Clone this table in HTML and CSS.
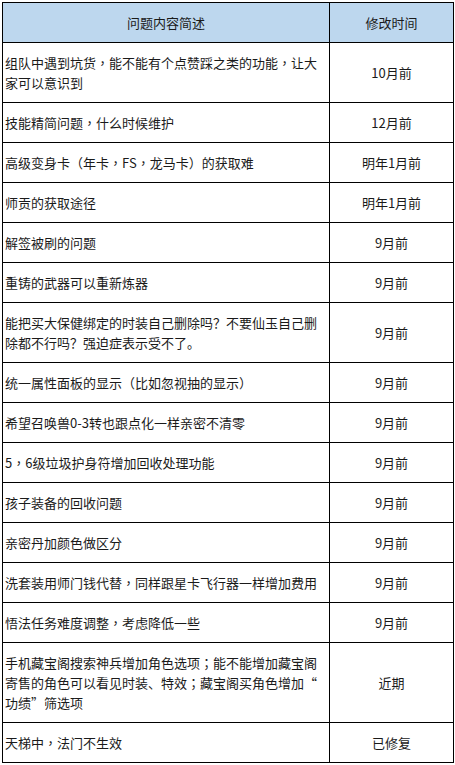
FILE: index.html
```html
<!DOCTYPE html>
<html lang="zh-CN">
<head>
<meta charset="utf-8">
<link rel="stylesheet" href="styles.css">
</head>
<body>
<div class="table">
  <div class="cell head">问题内容简述</div><div class="cell head c">修改时间</div>
  <div class="cell r2"><p class="t">组队中遇到坑货<span class="p" lang="zh-TW">，</span>能不能有个点赞踩之类的功能<span class="p" lang="zh-TW">，</span>让大家可以意识到</p></div><div class="cell c r2">10月前</div>
  <div class="cell"><p class="t">技能精简问题<span class="p" lang="zh-TW">，</span>什么时候维护</p></div><div class="cell c">12月前</div>
  <div class="cell"><p class="t">高级变身卡（年卡<span class="p" lang="zh-TW">，</span>FS<span class="p" lang="zh-TW">，</span>龙马卡）的获取难</p></div><div class="cell c">明年1月前</div>
  <div class="cell"><p class="t">师贡的获取途径</p></div><div class="cell c">明年1月前</div>
  <div class="cell"><p class="t">解签被刷的问题</p></div><div class="cell c">9月前</div>
  <div class="cell"><p class="t">重铸的武器可以重新炼器</p></div><div class="cell c">9月前</div>
  <div class="cell r2"><p class="t">能把买大保健绑定的时装自己删除吗？不要仙玉自己删除都不行吗？强迫症表示受不了。</p></div><div class="cell c r2">9月前</div>
  <div class="cell"><p class="t">统一属性面板的显示（比如忽视抽的显示）</p></div><div class="cell c">9月前</div>
  <div class="cell"><p class="t">希望召唤兽0-3转也跟点化一样亲密不清零</p></div><div class="cell c">9月前</div>
  <div class="cell"><p class="t">5<span class="p" lang="zh-TW">，</span>6级垃圾护身符增加回收处理功能</p></div><div class="cell c">9月前</div>
  <div class="cell"><p class="t">孩子装备的回收问题</p></div><div class="cell c">9月前</div>
  <div class="cell"><p class="t">亲密丹加颜色做区分</p></div><div class="cell c">9月前</div>
  <div class="cell"><p class="t">洗套装用师门钱代替<span class="p" lang="zh-TW">，</span>同样跟星卡飞行器一样增加费用</p></div><div class="cell c">9月前</div>
  <div class="cell"><p class="t">悟法任务难度调整<span class="p" lang="zh-TW">，</span>考虑降低一些</p></div><div class="cell c">9月前</div>
  <div class="cell r3"><p class="t any">手机藏宝阁搜索神兵增加角色选项<span class="p" lang="zh-TW">；</span>能不能增加藏宝阁寄售的角色可以看见时装、特效<span class="p" lang="zh-TW">；</span>藏宝阁买角色增加“功绩”筛选项</p></div><div class="cell c r3">近期</div>
  <div class="cell"><p class="t">天梯中<span class="p" lang="zh-TW">，</span>法门不生效</p></div><div class="cell c">已修复</div>
</div>
</body>
</html>
```

FILE: styles.css
```css
html, body {
  margin: 0;
  padding: 0;
  background: #ffffff;
}
body {
  width: 455px;
  height: 765px;
  overflow: hidden;
  font-family: "Noto Sans CJK SC", "Microsoft YaHei", sans-serif;
  font-size: 13px;
  line-height: 20px;
  color: #1a1a1a;
}
.table {
  margin: 2px 0 0 2px;
  display: grid;
  grid-template-columns: 327px 124px;
  width: 451px;
  border-top: 1px solid #000;
  border-left: 1px solid #000;
}
.cell {
  box-sizing: border-box;
  height: 40px;
  border-right: 1px solid #000;
  border-bottom: 1px solid #000;
  padding: 0 8px 0 2px;
  display: flex;
  align-items: center;
}
.t {
  margin: 0;
  word-break: break-all;
}
.t.any {
  line-break: anywhere;
}
.p {
  font-family: "Noto Sans CJK TC", "Noto Sans CJK SC", sans-serif;
}
.cell.c {
  justify-content: center;
  text-align: center;
  padding: 0;
}
.head {
  background: #bdd7ee;
  justify-content: center;
  padding: 0;
}
.r2 { height: 60px; }
.r3 { height: 80px; }
```
